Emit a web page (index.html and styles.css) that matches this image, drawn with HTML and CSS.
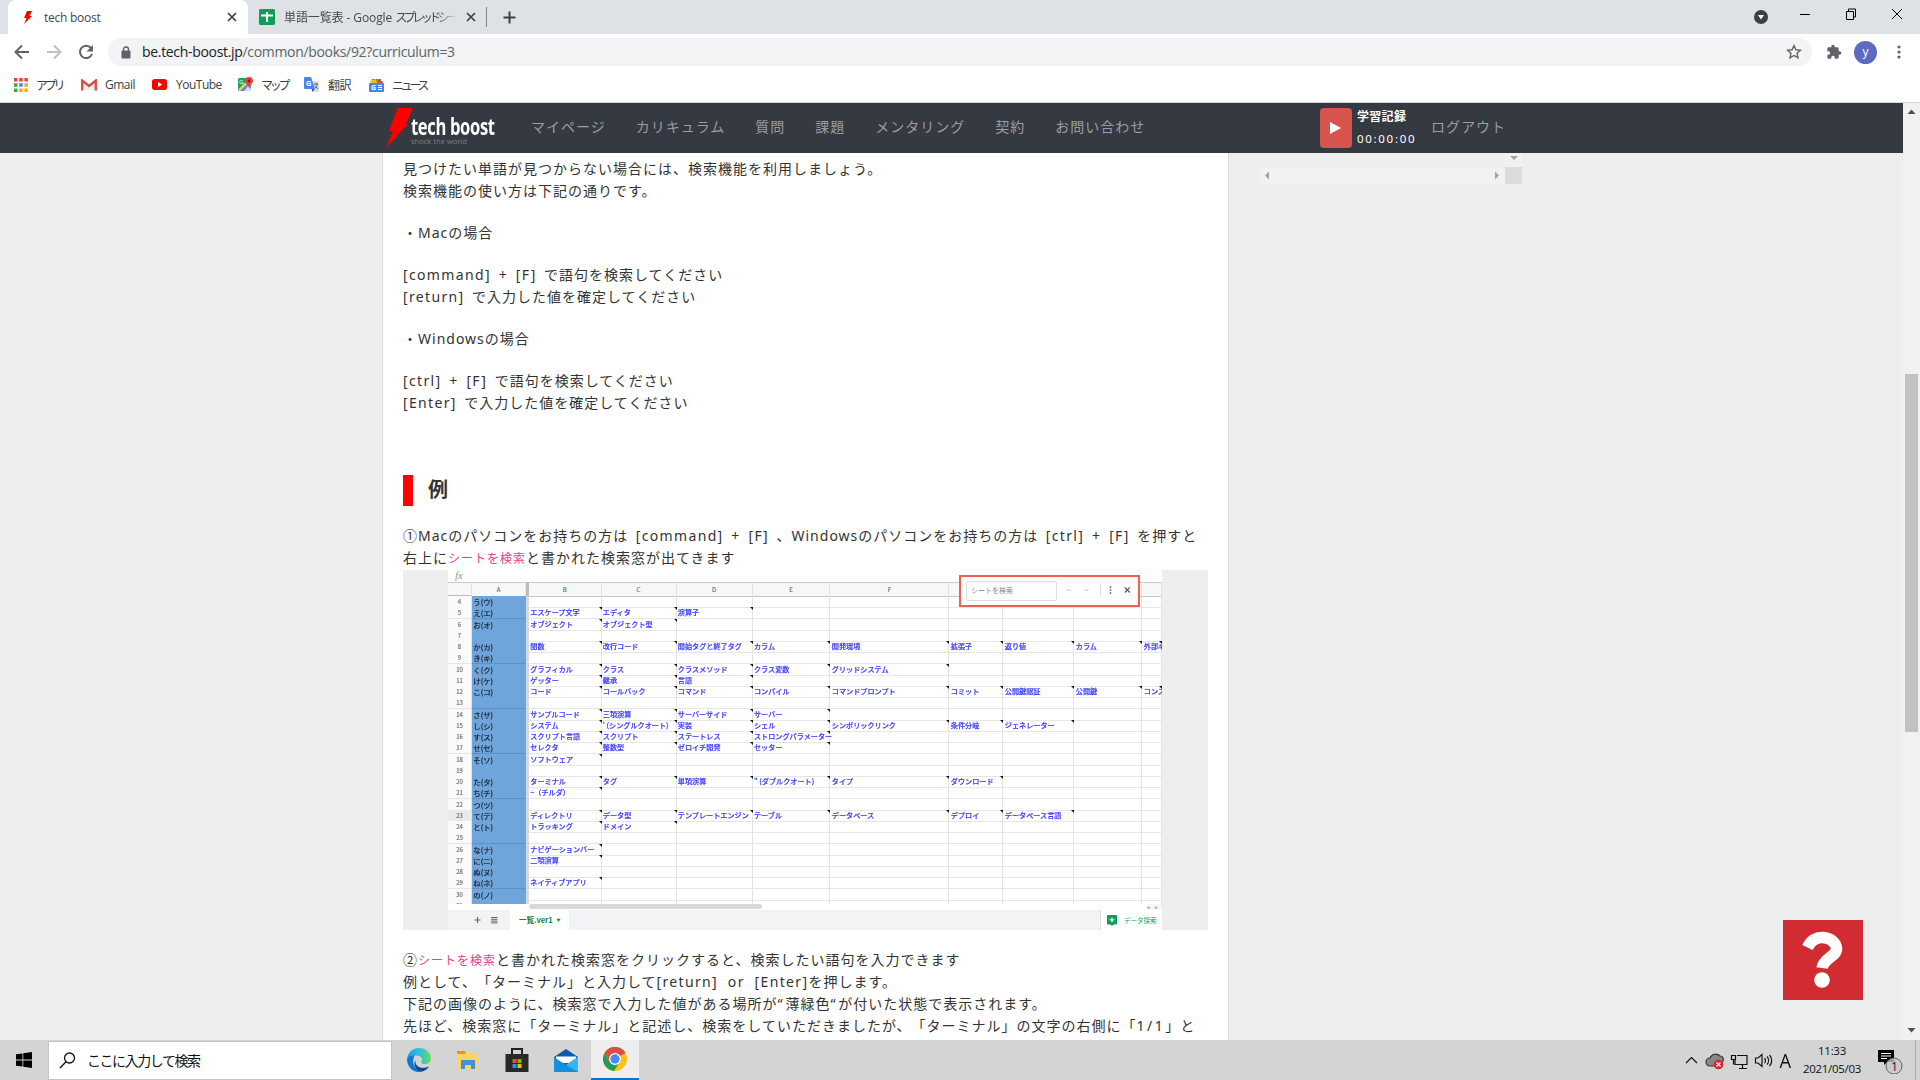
FILE: index.html
```html
<!DOCTYPE html>
<html lang="ja">
<head>
<meta charset="utf-8">
<title>tech boost</title>
<link rel="stylesheet" href="styles.css">
</head>
<body>
<div class="screen">
  <header class="browser">
    <div class="tabs">
      <div class="tab tab-active">
        <svg class="tab-icon bolt" width="12" height="15" viewBox="0 0 12 15"><path d="M5 1h5L7.500 6H10L2 14l2.500-6H2z" fill="#f00"/></svg>
        <span class="tab-title">tech boost</span>
        <svg class="tab-close" width="10" height="10" viewBox="0 0 10 10"><path d="M1 1l8 8M9 1l-8 8" stroke="#3c4043" stroke-width="1.700"/></svg>
      </div>
      <div class="tab tab-second">
        <svg class="tab-icon" width="16" height="16" viewBox="0 0 16 16"><rect width="16" height="16" rx="1.500" fill="#0f9d58"/><path d="M2 6.500h12M8 3v10" stroke="#fff" stroke-width="2"/></svg>
        <span class="tab-title second-title">単語一覧表 - Google <span class="kana-title">スプレッドシー</span></span>
        <svg class="tab-close" width="10" height="10" viewBox="0 0 10 10"><path d="M1 1l8 8M9 1l-8 8" stroke="#3c4043" stroke-width="1.700"/></svg>
      </div>
      <svg class="new-tab" width="13" height="13" viewBox="0 0 13 13"><path d="M6.500 0.500v12M0.500 6.500h12" stroke="#3c4043" stroke-width="2"/></svg>
      <svg class="window-buttons" width="160" height="34" viewBox="0 0 160 34">
        <circle cx="9" cy="17" r="7" fill="#3c4043"/><path d="M6 15h6l-3 4.500z" fill="#fff"/>
        <g fill="none" stroke="#000"><path d="M48 14.500h10M94.500 11.500h7v8h-7zM96.500 11v-2h7v8h-2M140 9l10 10M150 9l-10 10"/></g>
      </svg>
    </div>
    <div class="toolbar">
      <svg class="nav-buttons" width="100" height="36" viewBox="0 0 100 36" fill="none" stroke-width="2">
        <path d="M29 18H16M22 11.500L15.500 18l6.500 6.500" stroke="#5f6368"/>
        <path d="M47 18h13M54 11.500l6.500 6.500-6.500 6.500" stroke="#bdc1c6"/>
        <path d="M91 14a6.200 6.200 0 1 0 1 6" stroke="#5f6368"/><path d="M93 11v6.500h-6.500z" fill="#5f6368"/>
      </svg>
      <div class="omnibox">
        <svg width="10" height="13" viewBox="0 0 10 13"><path d="M2.500 5V3.500a2.500 2.500 0 0 1 5 0V5" fill="none" stroke="#5f6368" stroke-width="1.400"/><rect x="0.500" y="4.500" width="9" height="8" rx="1" fill="#5f6368"/></svg>
        <span class="url"><b>be.tech-boost.jp</b>/common/books/92?curriculum=3</span>
        <svg class="star" width="16" height="16" viewBox="0 0 16 16"><path d="M8 1.500l1.900 4.300 4.600.400-3.500 3.100 1 4.600L8 11.500l-4 2.400 1-4.600-3.500-3.100 4.600-.400z" fill="none" stroke="#5f6368" stroke-width="1.400"/></svg>
      </div>
      <svg class="puzzle" width="16" height="16" viewBox="0 0 24 24"><path d="M20.500 11H19V7c0-1.100-.900-2-2-2h-4V3.500a2.500 2.500 0 0 0-5 0V5H4c-1.100 0-2 .900-2 2v3.800h1.500a2.700 2.700 0 0 1 0 5.400H2V20c0 1.100.900 2 2 2h3.800v-1.500a2.700 2.700 0 0 1 5.400 0V22H17c1.100 0 2-.900 2-2v-4h1.500a2.500 2.500 0 0 0 0-5z" fill="#5f6368"/></svg>
      <div class="avatar">y</div>
      <svg width="4" height="14" viewBox="0 0 4 14" fill="#5f6368"><circle cx="2" cy="2" r="1.600"/><circle cx="2" cy="7" r="1.600"/><circle cx="2" cy="12" r="1.600"/></svg>
    </div>
    <nav class="bookmarks">
      <a class="bm bm-apps"><svg width="14" height="14" viewBox="0 0 14 14"><path d="M0 0h3.500v3.500H0zM5.200 0h3.500v3.500H5.200zM10.400 0h3.500v3.500h-3.500z" fill="#ea4335"/><path d="M0 5.200h3.500v3.500H0zM0 10.400h3.500v3.500H0z" fill="#34a853"/><path d="M5.200 5.200h3.500v3.500H5.200z" fill="#4285f4"/><path d="M10.400 5.200h3.500v3.500h-3.500zM5.200 10.400h3.500v3.500H5.200zM10.400 10.400h3.500v3.500h-3.500z" fill="#fbaa05"/></svg><span class="kana">アプリ</span></a>
      <a class="bm bm-gmail"><svg width="16" height="12" viewBox="0 0 16 12"><path d="M1 11V1l7 6 7-6v10" fill="#eee" stroke="none"/><path d="M1.200 11.500V1.500L8 7l6.800-5.500v10" fill="none" stroke="#dd4b3e" stroke-width="2.300"/></svg><span>Gmail</span></a>
      <a class="bm bm-youtube"><svg width="15" height="11" viewBox="0 0 15 11"><rect width="15" height="11" rx="2.800" fill="#f00"/><path d="M6 3l4.200 2.500L6 8z" fill="#fff"/></svg><span>YouTube</span></a>
      <a class="bm bm-map"><svg width="15" height="15" viewBox="0 0 15 15"><rect y="1" width="13" height="13" rx="1.500" fill="#1fa463"/><path d="M0 14L12 2l1 1v11z" fill="#4a89f3"/><path d="M0 13L11 1l2 2L2 14z" fill="#ffd04c"/><path d="M6 14l4-5 3 3v2z" fill="#ddd"/><path d="M7 4a4 4 0 0 1 8 0c0 3-3 3.500-4 7-1-3.500-4-4-4-7z" fill="#ea4335"/><circle cx="11" cy="4" r="1.400" fill="#7f1d16"/><text x="1" y="6.500" font-size="6" fill="#fff">G</text></svg><span class="kana">マップ</span></a>
      <a class="bm bm-trans"><svg width="15" height="15" viewBox="0 0 15 15"><path d="M5 4h9a1 1 0 0 1 1 1v9a1 1 0 0 1-1 1H8z" fill="#ddd"/><path d="M0 1a1 1 0 0 1 1-1h6l4 12H1a1 1 0 0 1-1-1z" fill="#4a86e8"/><path d="M8 12h3l-3 3z" fill="#2a56c6"/><text x="2" y="8.500" font-size="7.500" font-weight="bold" fill="#fff">G</text><path d="M10 7h4M12 6v1M13.500 7c-.5 2-1.500 3-2.500 4M11 8.500l3 3.500" stroke="#667" fill="none"/></svg><span>翻訳</span></a>
      <a class="bm bm-news"><svg width="15" height="14" viewBox="0 0 15 14"><path d="M3 1h9v5H3z" fill="#34a853"/><path d="M1 3l6-2 1 4-6 2z" fill="#fbbc04"/><path d="M9 2l5 1.500-1 4-4-1z" fill="#ea4335"/><rect y="5" width="15" height="9" rx="1" fill="#4285f4"/><text x="2" y="12" font-size="7" font-weight="bold" fill="#fff">G</text><path d="M9 7.500h4M9 9.500h4M9 11.500h4" stroke="#fff"/></svg><span class="kana news">ニュース</span></a>
    </nav>
  </header>

  <div class="viewport">
    <div class="page">
      <div class="site-nav">
        <a class="logo">
          <svg width="28" height="42" viewBox="0 0 28 42"><path d="M12.500 1H28L21 17h2L1 41l7-17H4z" fill="#f00"/></svg>
          <span class="logo-text"><b>tech boost</b><small>shock the world</small></span>
        </a>
        <div class="menu"><a>マイページ</a><a>カリキュラム</a><a>質問</a><a>課題</a><a>メンタリング</a><a>契約</a><a>お問い合わせ</a></div>
        <div class="record-button"><svg width="11" height="12" viewBox="0 0 11 12"><path d="M0 0l11 6-11 6z" fill="#fff"/></svg></div>
        <div class="record"><b>学習記録</b><span>00:00:00</span></div>
        <a class="logout">ログアウト</a>
      </div>
      <div class="content">
        <article class="card">
          <p>見つけたい単語が見つからない場合には、検索機能を利用しましょう。<br>検索機能の使い方は下記の通りです。</p>
          <p>・Macの場合</p>
          <p><kbd>[command] + [F]</kbd> で語句を検索してください<br><kbd>[return]</kbd> で入力した値を確定してください</p>
          <p>・Windowsの場合</p>
          <p><kbd>[ctrl] + [F]</kbd> で語句を検索してください<br><kbd>[Enter]</kbd> で入力した値を確定してください</p>
          <h2>例</h2>
          <p class="step-one">①Macのパソコンをお持ちの方は <kbd>[command] + [F]</kbd> 、Windowsのパソコンをお持ちの方は <kbd>[ctrl] + [F]</kbd> を押すと<br>右上に<code>シートを検索</code>と書かれた検索窓が出てきます</p>
          <figure class="figure">
            <div class="sheet">
              <div class="formula"><i>fx</i></div>
              <div class="row heads"><span class="corner"></span><span>A</span><span class="freeze"></span><span>B</span><span>C</span><span>D</span><span>E</span><span>F</span><span></span><span></span><span></span><span></span></div>
              <div class="rows" id="rows"></div>
              <div class="hscroll"><span class="hthumb"></span><span class="harrows"><i>◂</i><i>▸</i></span></div>
              <div class="sheet-tabs">
                <svg width="62" height="20" viewBox="0 0 62 20"><path d="M29.500 7v6M26.500 10h6" stroke="#666" stroke-width="1.200"/><path d="M43 7.500h6.500M43 9.300h6.500M43 11.100h6.500M43 12.900h6.500" stroke="#666"/></svg>
                <span class="sheet-tab">一覧.ver1 <i>▼</i></span>
                <span class="explore"><svg width="10" height="11" viewBox="0 0 10 11"><path d="M1 0h8a1 1 0 0 1 1 1v7.500a1 1 0 0 1-1 1H6.500L5 11 3.500 9.500H1a1 1 0 0 1-1-1V1a1 1 0 0 1 1-1z" fill="#0f9d58"/><path d="M5 2l.9 2 2.100.8-2.100.9L5 7.800l-.9-2.100L2 4.800l2.100-.8z" fill="#fff"/></svg>データ探索</span>
              </div>
              <div class="find"><span class="find-input">シートを検索</span>
                <svg width="78" height="20" viewBox="0 0 78 20" fill="none"><path d="M9.500 10l2-2 2 2M27.500 8l2 2 2-2" stroke="#aaa" stroke-width=".8"/><path d="M43.500 3v12" stroke="#ddd"/><path d="M53.500 5.200v1.600M53.500 8.200v1.600M53.500 11.200v1.600" stroke="#555" stroke-width="1.500"/><path d="M67.800 6.300l5 5.200M72.800 6.300l-5 5.200" stroke="#555" stroke-width="1.200"/></svg>
              </div>
            </div>
          </figure>
          <p class="step-two">②<code>シートを検索</code>と書かれた検索窓をクリックすると、検索したい語句を入力できます<br>例として、「ターミナル」と入力して<kbd class="keys">[return] or [Enter]</kbd>を押します。<br>下記の画像のように、検索窓で入力した値がある場所が<q>“</q>薄緑色<q>“</q>が付いた状態で表示されます。<br>先ほど、検索窓に「ターミナル」と記述し、検索をしていただきましたが、「ターミナル」の文字の右側に「<kbd class="ratio">1/1</kbd>」と</p>
        </article>
        <aside class="side">
          <svg width="263" height="31" viewBox="0 0 263 31"><path d="M0 14h246v17H0zM246 0h17v14h-17z" fill="#f1f1f1"/><path d="M246 14h17v17h-17z" fill="#dcdcdc"/><path d="M251 3h8l-4 4zM10 18.500v8l-4-4zM236 18.500v8l4-4z" fill="#a3a3a3"/></svg>
        </aside>
      </div>
      <div class="help"><svg width="80" height="80" viewBox="0 0 80 80"><path d="M24.500 27.500C28 20 34 17 40 17.500c7.500.5 13 5 13.500 11 .3 8-13 9.500-14.500 19.500" fill="none" stroke="#fff" stroke-width="11.500" stroke-linejoin="round"/><circle cx="39" cy="60" r="7.800" fill="#fff"/></svg></div>
    </div>
    <div class="scrollbar"><svg width="9" height="5" viewBox="0 0 9 5"><path d="M0.500 5h8L4.500 0.500z" fill="#505050"/></svg><span class="thumb"></span><svg class="down" width="9" height="5" viewBox="0 0 9 5"><path d="M0.500 0h8l-4 4.500z" fill="#505050"/></svg></div>
  </div>

  <footer class="taskbar">
    <svg class="start" width="16" height="16" viewBox="0 0 16 16"><path d="M0 2.300l6.500-.9v6.200H0zM7.300 1.300L16 0v7.600H7.300zM0 8.400h6.500v6.200L0 13.700zM7.300 8.400H16V16l-8.700-1.300z"/></svg>
    <div class="search"><svg width="17" height="17" viewBox="0 0 17 17" fill="none" stroke="#111" stroke-width="1.300"><circle cx="10.500" cy="6" r="5"/><path d="M7 9.700L1 16"/></svg><span>ここに入力して検索</span></div>
    <div class="app"><svg width="24" height="24" viewBox="0 0 24 24"><defs><linearGradient id="eg" x1="0" x2="1"><stop stop-color="#1b9de2"/><stop offset=".55" stop-color="#35c1d8"/><stop offset="1" stop-color="#66dd52"/></linearGradient></defs><path d="M0 11C1 4 6 0 12 0c7 0 12 5 12 10 0 4-3 6-6 6-3.500 0-4.500-1.500-3.500-2.500 2-3-1-6-5-6C5 7.500 1 9 0 11z" fill="url(#eg)"/><path d="M0 11c1-3 4.500-4 8-3.500C5 11 5 20 14 23.800 6 25 0 19 0 11z" fill="#0f78d0"/><path d="M8.500 12c-1 6 5 10 13.500 6.500C20 22 17 23.500 14 23.800 7 22 6.500 15 8.500 12z" fill="#114a8b"/></svg></div>
    <div class="app"><svg width="22" height="20" viewBox="0 0 22 20"><path d="M0 1h8l2 2h11v16H0z" fill="#ffd45e"/><path d="M0 1h8.500v3H0z" fill="#e0a100"/><path d="M4 19v-9h14v9h-4v-4H8v4z" fill="#3d94dc"/></svg></div>
    <div class="app"><svg width="24" height="24" viewBox="0 0 24 24"><path d="M7 8V1h10v7" fill="none" stroke="#222" stroke-width="2"/><path d="M0.500 6h23v18h-23z" fill="#292929"/><path d="M7.500 11h4v4h-4z" fill="#f25022"/><path d="M12.500 11h4v4h-4z" fill="#7fba00"/><path d="M7.500 16h4v4h-4z" fill="#00a4ef"/><path d="M12.500 16h4v4h-4z" fill="#ffb900"/></svg></div>
    <div class="app"><svg width="24" height="23" viewBox="0 0 24 23"><path d="M0 8l12-8 12 8v8H0z" fill="#0b5ab0"/><path d="M2 7.500h20V14H2z" fill="#fff"/><path d="M0 8l12 8 12-8v15H0z" fill="#1490df"/><path d="M24 8v15L9 14l3 2z" fill="#32b8f2"/></svg></div>
    <div class="app app-open"><svg width="24" height="24" viewBox="0 0 24 24"><circle cx="12" cy="12" r="12" fill="#fbc116"/><path d="M12 12L1.600 6A12 12 0 0 1 22.400 6z" fill="#d94f43"/><path d="M12 12H12L6.800 15 1.600 6A12 12 0 0 0 11 24l5.500-9z" fill="#1f9d58"/><path d="M12 6h10.400a12 12 0 0 0-20.800 0L7 15z" fill="#d94f43"/><circle cx="12" cy="12" r="6" fill="#fff"/><circle cx="12" cy="12" r="4.700" fill="#4a8af4"/></svg></div>
    <div class="tray">
      <svg width="90" height="24" viewBox="0 0 90 24" fill="none" stroke="#111" stroke-width="1.200"><path d="M2 15l5.500-5.500L13 15"/><path d="M26 18a4 4 0 0 1 0-8 6 6 0 0 1 10-2c3 0 4 3 3 5l-3 5z" fill="#888" stroke="#333"/><circle cx="34.500" cy="16.500" r="4.800" fill="#e02030" stroke="none"/><path d="M32.500 14.500l4 4M36.500 14.500l-4 4" stroke="#fff"/><path d="M53 7.500h10v9H51V12M55 20.500h8M58.500 17v3M47.500 7.500h4v4h-4zM49.500 11.500v5"/><path d="M71.500 10v5h2.500l4 3.500v-12L74 10zM80.500 10a4 4 0 0 1 0 5M83 8.500a6 6 0 0 1 0 8M85.500 7a8 8 0 0 1 0 11"/></svg>
      <span class="ime">A</span>
      <div class="clock"><span>11:33</span><span>2021/05/03</span></div>
      <svg class="notice" width="26" height="28" viewBox="0 0 26 28"><path d="M0 4h16v12h-7l-3 3v-3H0z" fill="#000"/><path d="M3 7.500h10M3 10h10M3 12.500h6" stroke="#fff"/><circle cx="16" cy="20" r="8" fill="#c8c8c8" fill-opacity=".8" stroke="#666"/><text x="13" y="24.500" font-size="12" fill="#222">1</text></svg>
      <span class="peek"></span>
    </div>
  </footer>
</div>
<script src="sheet.js"></script>
</body>
</html>
```
FILE: styles.css
```css
* { box-sizing: border-box; }
body { margin: 0; overflow: hidden; font-family: "Noto Sans", "Noto Sans CJK JP", sans-serif; color: #333; }
svg { display: block; flex: none; }
p, h2, figure { margin: 0; }
.screen { width: 1920px; height: 1080px; display: flex; flex-direction: column; }

/* browser chrome */
.browser { height: 103px; background: #fff; border-bottom: 1px solid #d5d7da; font-family: "Open Sans", "Noto Sans CJK JP", sans-serif; }
.tabs { height: 34px; background: #dee1e6; display: flex; align-items: center; padding-left: 8px; }
.tab { display: flex; align-items: center; height: 34px; font-size: 12px; color: #45494d; }
.tab-active { width: 240px; background: #fff; border-radius: 8px 8px 0 0; padding: 0 11px 0 14px; }
.tab-second { width: 239px; padding: 0 10px 0 11px; border-right: 1px solid #808488; height: 20px; }
.tab-icon { margin-right: 9px; }
.bolt { margin-right: 10px; }
.tab-title { flex: 1; white-space: nowrap; letter-spacing: -.25px; }
.second-title { letter-spacing: -.1px; margin-right: 9px; -webkit-mask-image: linear-gradient(90deg, #000 88%, transparent); }
.kana-title { letter-spacing: -3.500px; }
.new-tab { margin-left: 16px; }
.window-buttons { margin-left: auto; margin-right: 8px; }
.toolbar { height: 36px; display: flex; align-items: center; }
.nav-buttons { margin-right: 8px; }
.omnibox { width: 1704px; height: 28px; border-radius: 14px; background: #f1f3f4; display: flex; align-items: center; padding: 0 10px 0 13px; }
.url { flex: 1; margin-left: 11px; font-size: 14px; letter-spacing: -.32px; color: #5f6368; padding-bottom: 1px; }
.url b { font-weight: 400; color: #202124; }
.puzzle { margin-left: 14px; }
.avatar { width: 23px; height: 23px; margin: 0 20px 0 12px; border-radius: 50%; background: #5c6bc0; color: #fff; font-size: 12px; line-height: 21px; text-align: center; }
.bookmarks { height: 32px; display: flex; align-items: center; padding: 0 0 3px 14px; font-size: 12px; color: #3c4043; }
.bm { display: flex; align-items: center; gap: 9px; white-space: nowrap; letter-spacing: -.5px; }
.bm-apps { width: 67px; }
.bm-gmail { width: 71px; gap: 8px; }
.bm-youtube { width: 86px; }
.bm-map { width: 66px; }
.bm-trans { width: 65px; }
.kana { letter-spacing: -3.300px; margin-left: -1px; }

/* page */
.viewport { height: 937px; display: flex; }
.page { width: 1903px; background: #eee; position: relative; overflow: hidden; }
.site-nav { height: 50px; background: #353941; display: flex; align-items: center; padding-left: 385px; color: #9b9da1; font-size: 14px; letter-spacing: 1px; }
.logo { display: flex; width: 146px; color: #fff; letter-spacing: 0; }
.logo svg { margin-right: -2px; }
.logo-text { display: flex; flex-direction: column; padding-top: 7px; }
.logo-text b { font: 700 24px/24px "Open Sans", sans-serif; transform: scaleX(.69); transform-origin: left; width: 84px; white-space: nowrap; letter-spacing: -.5px; }
.logo-text small { font-size: 7.500px; line-height: 8px; margin-top: -1px; color: #777b80; }
.menu { display: flex; gap: 30px; width: 789px; white-space: nowrap; padding-bottom: 5px; }
.record-button { width: 32px; height: 40px; border-radius: 4px; background: #d9534f; display: grid; place-items: center; padding-right: 1px; }
.record { width: 74px; margin: 0 0 0 5px; display: flex; flex-direction: column; font-size: 12px; line-height: 22px; color: #fff; letter-spacing: .3px; }
.record span { font-size: 11.500px; letter-spacing: 1.700px; }
.logout { padding-bottom: 5px; }
.content { display: flex; height: 887px; padding-left: 382px; }
.card { width: 847px; background: #fff; border: solid #ddd; border-width: 0 1px; padding: 5px 0 0 20px; font-size: 14px; line-height: 22px; letter-spacing: 1px; word-spacing: 2.800px; text-spacing-trim: space-all; white-space: nowrap; overflow: hidden; }
.card p { margin-bottom: 20px; }
.card h2 { margin: 61px 0 19px; height: 31px; border-left: 10px solid #f00; padding-left: 15px; font-size: 20px; line-height: 30px; }
.card .step-one { margin-bottom: 1px; }
.card .step-two { margin-top: 19px; }
.card q { quotes: none; letter-spacing: 2.800px; }
kbd { font: inherit; letter-spacing: 1.350px; }
kbd.keys { word-spacing: 4.800px; }
kbd.ratio { letter-spacing: 2.500px; }
code { font-family: "Noto Sans CJK JP", sans-serif; font-size: 12px; color: #e83e8c; line-height: 1; }
.side { padding-left: 30px; }
.help { position: absolute; right: 40px; bottom: 40px; width: 80px; height: 80px; background: #d02c32; }
.scrollbar { width: 17px; background: #f1f1f1; display: flex; flex-direction: column; align-items: center; padding: 6px 0 7px; }
.thumb { width: 13px; height: 358px; background: #c1c1c1; margin-top: 260px; }
.down { margin-top: auto; }

/* spreadsheet figure */
.figure { width: 805px; height: 360px; background: #eee; padding-left: 45px; letter-spacing: 0; word-spacing: 0; line-height: 11px; }
.sheet { position: relative; width: 714px; height: 360px; background: #fff; overflow: hidden; font-family: "Noto Sans CJK JP", sans-serif; font-size: 7.130px; }
.formula { height: 12px; padding-left: 7px; font: 11px/11px "Liberation Serif", serif; color: #999; }
.row { display: grid; grid-template-columns: 24px 54px 3px 72.500px 75px 76.200px 77.800px 119px 54px 71px 68px 20px; height: 11.265px; }
.row > span { border-right: 1px solid #e3e3e3; border-bottom: 1px solid #e6e6e6; position: relative; padding-left: 1.300px; color: #3c3cff; font-weight: 500; -webkit-text-stroke: .2px currentColor; }
.row > .num { color: #777; background: #fafafa; text-align: center; font-size: 6px; padding: 0; font-weight: 400; }
.row > .current { background: #e8eaed; }
.row > .kana-key { background: #6fa5da; border-color: #5c91c9; border-right: 0; color: #16202c; font-weight: 400; font-size: 7.400px; }
.row > .freeze { background: #d5d8dd; border: 0; padding: 0; }
.note::after { content: ""; position: absolute; top: 0; right: -1px; border-top: 3.500px solid #111; border-left: 3.500px solid transparent; }
.heads { height: 14px; }
.heads > span { background: #f6f7f8; color: #777; text-align: center; font-size: 6px; line-height: 13px; border-top: 1px solid #ccc; border-bottom-color: #c5c5c5; padding: 0; font-weight: 400; }
.heads > .corner { border-bottom: 2px solid #bbb; }
.heads > .freeze { background: #bbb; }
.rows { height: 308px; overflow: hidden; filter: blur(.3px); }
.hscroll { height: 6px; display: flex; justify-content: space-between; background: #fff; padding-left: 81px; }
.hthumb { width: 233px; height: 5px; border-radius: 3px; background: #d7d9dc; }
.harrows { display: flex; gap: 5px; padding-right: 4px; font-size: 5px; line-height: 5px; color: #888; background: #f5f5f5; }
.harrows i, .sheet-tab i { font-style: normal; }
.sheet-tabs { height: 20px; background: #f1f3f4; display: flex; }
.sheet-tab { width: 59px; background: #fff; color: #188038; font-weight: 700; font-size: 7.500px; line-height: 19px; padding-left: 9px; }
.sheet-tab i { font-size: 4px; margin-left: 2px; vertical-align: 1px; }
.explore { margin-left: auto; width: 62px; background: #fff; border-left: 1px solid #ddd; display: flex; align-items: center; gap: 7px; padding-left: 6px; font-size: 6.500px; color: #0f9d58; }
.find { position: absolute; left: 511px; top: 5px; width: 181px; height: 32px; border: 2px solid #f0604e; background: #fff; display: flex; align-items: center; padding-left: 5px; }
.find-input { width: 91px; height: 20px; border: 1px solid #ddd; border-radius: 2px; padding-left: 4px; font-size: 7px; line-height: 17px; color: #888; }

/* taskbar */
.taskbar { height: 40px; background: #d4d4d4; display: flex; align-items: center; color: #111; font-family: "Open Sans", "Noto Sans CJK JP", sans-serif; }
.start { margin: 0 16px 0 16px; }
.search { width: 344px; height: 39px; background: #fff; border: 1px solid #c4c4c4; display: flex; align-items: center; padding-left: 10px; gap: 11px; font-size: 14px; letter-spacing: -1.450px; }
.app { width: 49px; height: 40px; display: grid; place-items: center; padding-left: 4px; }
.app-open { background: #eee; border-bottom: 2px solid #0078d7; width: 48px; padding: 0; margin-left: 3px; }
.tray { display: flex; align-items: center; margin-left: auto; }
.ime { font-size: 20px; width: 20px; text-indent: 5px; transform: scaleX(.92); }
.clock { width: 76px; display: flex; flex-direction: column; text-align: center; font-size: 11.500px; line-height: 18px; letter-spacing: -.3px; }
.notice { margin: 0 11px 0 8px; }
.peek { width: 5px; height: 40px; border-left: 1px solid #aaa; }
```
FILE: sheet.js
```js
// [kana key, B, C, D, ...] for spreadsheet rows 4 to 31
const data = [
  ['う(ウ)'],
  ['え(エ)', 'エスケープ文字', 'エディタ', '演算子'],
  ['お(オ)', 'オブジェクト', 'オブジェクト型'],
  [''],
  ['か(カ)', '関数', '改行コード', '開始タグと終了タグ', 'カラム', '開発環境', '拡張子', '返り値', 'カラム', '外部キー'],
  ['き(キ)'],
  ['く(ク)', 'グラフィカル', 'クラス', 'クラスメソッド', 'クラス変数', 'グリッドシステム'],
  ['け(ケ)', 'ゲッター', '継承', '言語'],
  ['こ(コ)', 'コード', 'コールバック', 'コマンド', 'コンパイル', 'コマンドプロンプト', 'コミット', '公開鍵認証', '公開鍵', 'コンス'],
  [''],
  ['さ(サ)', 'サンプルコード', '三項演算', 'サーバーサイド', 'サーバー'],
  ['し(シ)', 'システム', "' (シングルクオート)", '実装', 'シェル', 'シンボリックリンク', '条件分岐', 'ジェネレーター'],
  ['す(ス)', 'スクリプト言語', 'スクリプト', 'ステートレス', 'ストロングパラメーター'],
  ['せ(セ)', 'セレクタ', '整数型', 'ゼロイチ開発', 'セッター'],
  ['そ(ソ)', 'ソフトウェア'],
  [''],
  ['た(タ)', 'ターミナル', 'タグ', '単項演算', '" (ダブルクオート)', 'タイプ', 'ダウンロード'],
  ['ち(チ)', '~（チルダ）'],
  ['つ(ツ)'],
  ['て(テ)', 'ディレクトリ', 'データ型', 'テンプレートエンジン', 'テーブル', 'データベース', 'デプロイ', 'データベース言語'],
  ['と(ト)', 'トラッキング', 'ドメイン'],
  [''],
  ['な(ナ)', 'ナビゲーションバー'],
  ['に(ニ)', '二項演算'],
  ['ぬ(ヌ)'],
  ['ね(ネ)', 'ネイティブアプリ'],
  ['の(ノ)'],
  ['']
];

function cell(className, text) {
  const span = document.createElement('span');
  span.className = className;
  span.textContent = text;
  return span;
}

data.forEach((values, index) => {
  const row = document.createElement('div');
  row.className = 'row';
  const number = index + 4;
  row.append(cell(number === 23 ? 'num current' : 'num', number));
  row.append(cell('kana-key', values[0]), cell('freeze', ''));
  for (let column = 1; column <= 9; column++) {
    row.append(cell(values[column] ? 'note' : '', values[column] || ''));
  }
  document.getElementById('rows').append(row);
});
```
